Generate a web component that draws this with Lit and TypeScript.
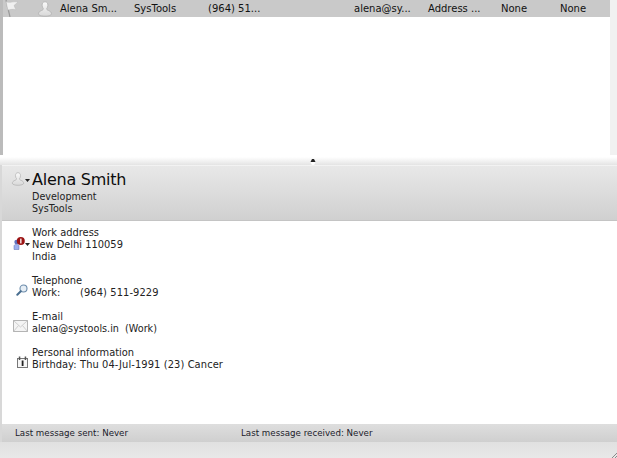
import { LitElement, html, css } from "lit";
import { customElement } from "lit/decorators.js";

const person = (w: number, h: number) => html`<svg width=${w} height=${h} viewBox="0 0 16 16">
  <defs><linearGradient id="pg" x1="0" y1="0" x2="0" y2="1"><stop offset="0" stop-color="#fafafa"/><stop offset="1" stop-color="#d8d8d8"/></linearGradient></defs>
  <path d="M8 .8c2 0 2.900 1.500 2.900 3.400 0 1.500-.6 2.600-1.200 3.300 0 1.100.4 1.500 1.700 2 2 .8 3.100 1.800 3.100 3.300 0 1.500-3 2.400-6.500 2.400S1.500 14.300 1.500 12.800c0-1.500 1.100-2.500 3.100-3.300 1.300-.5 1.700-.9 1.700-2C5.700 6.800 5.100 5.700 5.100 4.200 5.100 2.300 6 .8 8 .8z" fill="url(#pg)" stroke="#b0b0b0" stroke-width=".8"/>
</svg>`;

const caret = html`<svg class="caret" width="5" height="3" viewBox="0 0 5 3"><path d="M0 0h5L2.500 3z" fill="#222"/></svg>`;

const addressIcon = html`<svg width="12" height="13" viewBox="0 0 12 13">
  <circle cx="3.500" cy="5" r="2.200" fill="#5f72c0"/>
  <path d="M1 12.500V9c0-1 1.300-1.800 2.500-1.800S6 8 6 9v3.500z" fill="#9db0ee" stroke="#5a6db0" stroke-width=".5"/>
  <circle cx="7.800" cy="4" r="4" fill="#9c1414"/>
  <rect x="7.200" y="1.600" width="1.300" height="4.800" fill="#fff"/>
</svg>`;

const lens = html`<svg width="12" height="12" viewBox="0 0 12 12">
  <circle cx="7.500" cy="4.500" r="3.500" fill="#e6eef5" stroke="#6c8cab" stroke-width="1.100"/>
  <path d="M4.800 7.200L1.300 10.700" stroke="#4a6f90" stroke-width="2" stroke-linecap="round"/>
</svg>`;

const envelope = html`<svg width="15" height="12" viewBox="0 0 15 12">
  <rect x=".5" y=".5" width="14" height="11" fill="#f4f4f4" stroke="#b4b4b4"/>
  <path d="M.5.500L7.500 7 14.500.5M.5 11.500L5.500 5.500M14.500 11.500L9.500 5.500" fill="none" stroke="#c4c4c4" stroke-width=".8"/>
</svg>`;

const calendar = html`<svg width="11" height="12" viewBox="0 0 11 12">
  <rect x=".5" y="2.500" width="10" height="9" fill="#f7f7f7" stroke="#777"/>
  <rect x="1.800" y=".5" width="1.500" height="3.500" fill="#555"/>
  <rect x="7.700" y=".5" width="1.500" height="3.500" fill="#555"/>
  <rect x="4.700" y="4.500" width="1.800" height="5.500" fill="#222"/>
</svg>`;

const flag = html`<svg width="17" height="17" viewBox="0 0 17 17">
  <path d="M3 0l4 17" stroke="#999" stroke-width="1.200" fill="none"/>
  <path d="M3 1.500c4 2 6-.5 12 .5l-4 3.500 2 4.500C10 8.500 7 10 4.800 10z" fill="#f0f0f0" stroke="#bbb" stroke-width=".5"/>
</svg>`;

@customElement("app-root")
export class AppRoot extends LitElement {
  static styles = css`
    :host {
      display: flex;
      flex-direction: column;
      width: 617px;
      height: 458px;
      overflow: hidden;
      background: #f1f1f1;
      font-family: "DejaVu Sans", sans-serif;
      font-size: 9.9px;
      line-height: 12px;
      color: #222;
    }
    .list {
      height: 155px;
      display: flex;
      flex-direction: column;
      background: #fff;
      border-left: 3px solid #bbb;
      margin-right: 7px;
      flex: none;
    }
    .row {
      height: 17px;
      flex: none;
      background: #c9c9c9;
      display: grid;
      grid-template-columns: 34px 23px 74px 74px 146px 74px 73px 59px 1fr;
      align-items: center;
      font-size: 10px;
      color: #111;
    }
    .row > * { white-space: nowrap; }
    .row svg { display: block; }
    .splitter {
      height: 10px;
      flex: none;
      box-sizing: border-box;
      background: linear-gradient(#ffffff 20%, #e4e4e4);
      display: flex;
      justify-content: center;
      padding-left: 9px;
    }
    .knob { margin-top: 4px; display: block; }
    .detail {
      flex: 1;
      display: flex;
      flex-direction: column;
      min-height: 0;
      border-left: 2px solid #d8d8d8;
    }
    .header {
      height: 56px;
      flex: none;
      box-sizing: border-box;
      background: linear-gradient(#e8e8e8, #d0d0d0);
      border-top: 1px solid #f2f2f2;
      border-bottom: 1px solid #c4c4c4;
      display: grid;
      grid-template-columns: 30px 1fr;
      padding-top: 4px;
    }
    .hicon { display: flex; align-items: flex-start; padding: 1px 0 0 9px; }
    .hicon .caret { margin-top: 8px; }
    .name { font-size: 16px; letter-spacing: -.25px; line-height: 20px; color: #0d0d0d; }
    .sub { margin-top: 1px; font-size: 9.600px; }
    .body {
      flex: 1;
      background: #fff;
      padding-top: 6px;
      display: flex;
      flex-direction: column;
      gap: 12px;
    }
    .sec {
      display: grid;
      grid-template-columns: 30px 1fr;
    }
    .ic {
      display: flex;
      justify-content: flex-end;
      align-items: flex-end;
    }
    .ic .caret { margin-bottom: 4px; }
    .ic-addr { padding: 0 2px 13px 0; }
    .ic-lens { padding: 0 4px 3px 0; }
    .ic-mail { padding: 0 4px 3px 0; }
    .ic-cal { padding: 0 4px 3px 0; }
    .kv { display: flex; }
    .k { width: 48px; flex: none; }
    .v { white-space: pre; }
    .wide { letter-spacing: .1px; }
    .mail { font-size: 9.650px; }
    .footer {
      height: 18px;
      flex: none;
      background: linear-gradient(#dedede, #cfcfcf);
      display: grid;
      grid-template-columns: 226px 1fr;
      align-items: center;
      padding-left: 13px;
      font-size: 8.700px;
      color: #1a1a2a;
    }
    .bottom {
      height: 16px;
      flex: none;
      margin-left: -2px;
      background: linear-gradient(#e0e0e0, #e8e8e8);
      position: relative;
    }
    .grip { position: absolute; right: 0; bottom: 0; display: block; }
  `;

  render() {
    return html`
      <div class="list">
        <div class="row">
          <div>${flag}</div>
          <div>${person(16, 16)}</div>
          <div>Alena Sm...</div>
          <div>SysTools</div>
          <div>(964) 51...</div>
          <div>alena@sy...</div>
          <div>Address ...</div>
          <div>None</div>
          <div>None</div>
        </div>
      </div>
      <div class="splitter">
        <svg class="knob" width="6" height="6" viewBox="0 0 6 6"><circle cx="3" cy="4" r="2" fill="#fff"/><path d="M2 0h2L5.500 3H.5z" fill="#222"/></svg>
      </div>
      <div class="detail">
        <div class="header">
          <div class="hicon">${person(14, 16)}${caret}</div>
          <div>
            <div class="name">Alena Smith</div>
            <div class="sub">Development<br />SysTools</div>
          </div>
        </div>
        <div class="body">
          <div class="sec">
            <div class="ic ic-addr">${addressIcon}${caret}</div>
            <div>Work address<br />New Delhi 110059<br />India</div>
          </div>
          <div class="sec">
            <div class="ic ic-lens">${lens}</div>
            <div>Telephone<div class="kv"><span class="k">Work:</span><span class="v wide">(964) 511-9229</span></div></div>
          </div>
          <div class="sec">
            <div class="ic ic-mail">${envelope}</div>
            <div>E-mail<div class="v mail">alena@systools.in  (Work)</div></div>
          </div>
          <div class="sec">
            <div class="ic ic-cal">${calendar}</div>
            <div>Personal information<div class="kv"><span class="k">Birthday:</span><span class="v wide">Thu 04-Jul-1991 (23) Cancer</span></div></div>
          </div>
        </div>
        <div class="footer">
          <div>Last message sent: Never</div>
          <div>Last message received: Never</div>
        </div>
        <div class="bottom">
          <svg class="grip" width="6" height="6" viewBox="0 0 6 6"><path d="M6 1L1 6M6 4L4 6" stroke="#8a8a8a" stroke-width="1"/></svg>
        </div>
      </div>
    `;
  }
}
